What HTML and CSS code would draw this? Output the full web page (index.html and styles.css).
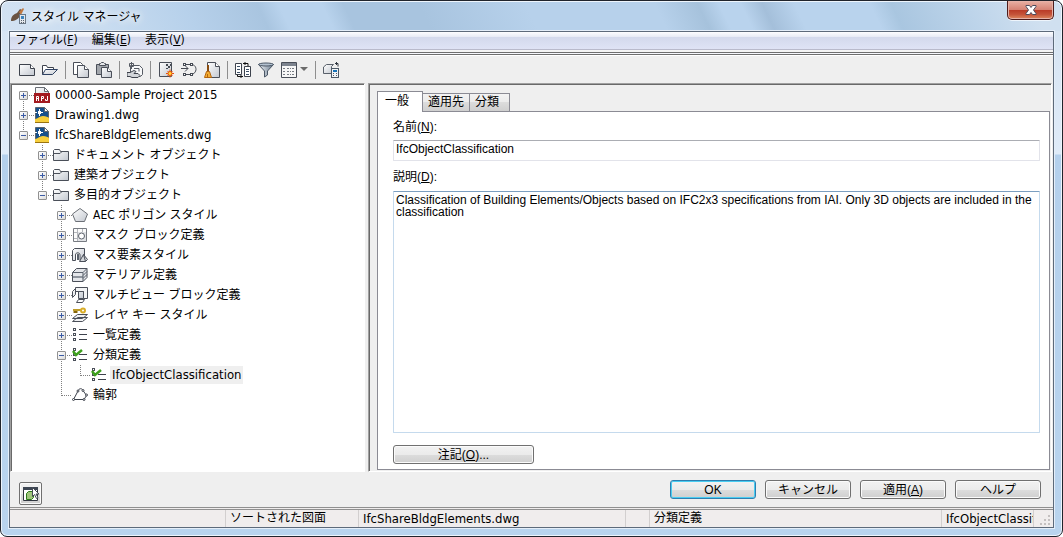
FILE: index.html
```
<!DOCTYPE html>
<html lang="ja">

<head>
    <meta charset="UTF-8">
    <meta name="viewport" content="width=device-width, initial-scale=1.0">
    <title>スタイル マネージャ</title>
    <link rel="stylesheet" href="styles.css">
</head>

<body>
    <!-- shared icons -->
    <svg class="defs" aria-hidden="true">
        <defs>
            <linearGradient id="paper" x1="0" y1="0" x2="1" y2="1">
                <stop offset="0" stop-color="#ffffff" />
                <stop offset="1" stop-color="#c3c8d0" />
            </linearGradient>
            <linearGradient id="steel" x1="0" y1="0" x2="1" y2="0">
                <stop offset="0" stop-color="#f4f7fa" />
                <stop offset="1" stop-color="#66788c" />
            </linearGradient>
        </defs>
        <symbol id="i-dwg" viewBox="0 0 16 16">
            <path d="M1.500 .5h9l4 4v11h-13z" fill="#16508c" stroke="#5a6470" />
            <path d="M10.500 .5v4h4z" fill="#fff" stroke="#5a6470" />
            <path d="M1 12c3 0 4-3 8-3 3 0 5 1 6 2v5H1z" fill="#f7cf3c" />
            <path d="M1 15.500h14" stroke="#9a7412" fill="none" />
            <path d="M1 5.500h2M7 5.500h2M5.500 2v2M5.500 7v2" stroke="#fff" fill="none" />
            <rect x="4" y="4" width="3" height="3" fill="#fff" />
        </symbol>
        <symbol id="i-folder" viewBox="0 0 16 16">
            <path d="M.5 13.500V3.500l1-1h5l1 2h8v9z" fill="url(#paper)" stroke="#4a4f59" />
            <path d="M1 6.500h6l2-2" fill="none" stroke="#4a4f59" />
        </symbol>
        <symbol id="i-class" viewBox="0 0 16 16">
            <g fill="#fff" stroke="#4a4f59">
                <rect x="1.500" y="1.500" width="2" height="2" />
                <rect x="1.500" y="6.500" width="2" height="2" />
                <rect x="1.500" y="11.500" width="2" height="2" />
            </g>
            <path d="M7 7.500h8M7 12.500h8" stroke="#3d424c" />
            <path d="M1 4l3 4 6-5" fill="none" stroke="#3da01c" stroke-width="2.500" />
        </symbol>
    </svg>

    <div class="window">
        <header class="titlebar">
            <svg class="icon" viewBox="0 0 16 16">
                <path d="M0 13c0-5 3-7 6-8l3-4 2 1-2 5c-1 4-5 6-9 6z" fill="#6a5342" />
                <path d="M8 4l4-4 1 1-3 6z" fill="#c07840" />
                <rect x="8.500" y="6.500" width="6" height="9" fill="#e4e8ed" stroke="#697684" />
                <path d="M10 8h3v3h-3z" fill="#3b83bd" />
                <path d="M10 12.500h1M12 12.500h1M10 14.500h1M12 14.500h1" stroke="#59636e" />
            </svg>
            <h1>スタイル マネージャ</h1>
            <button class="close" type="button" aria-label="閉じる">
                <svg viewBox="0 0 12 10">
                    <path d="M1 .5h3.500L6 2.500 7.500 .5H11v1L8.500 5 11 8.500v1H7.500L6 7.500 4.500 9.500H1v-1L3.500 5 1 1.500z" fill="#fff" stroke="#4e4c5d" />
                </svg>
            </button>
        </header>

        <div class="client">
            <nav class="menubar">
                <button type="button">ファイル(<u>F</u>)</button>
                <button type="button">編集(<u>E</u>)</button>
                <button type="button">表示(<u>V</u>)</button>
            </nav>

            <div class="toolbar">
                <button type="button" aria-label="新規">
                    <svg viewBox="0 0 16 16">
                        <path d="M.5 2.500h11l4 4v7H.5z" fill="url(#paper)" stroke="#3d424c" />
                        <path d="M11.500 2.500v4h4" fill="#fff" stroke="#3d424c" />
                    </svg>
                </button>
                <button type="button" aria-label="開く">
                    <svg viewBox="0 0 16 16">
                        <path d="M.5 12.500v-9h4l1 2h6v2" fill="#fff" stroke="#3d424c" />
                        <path d="M.5 12.500l3-5h12l-5 5z" fill="url(#paper)" stroke="#2f4262" />
                    </svg>
                </button>
                <span class="sep"></span>
                <button type="button" aria-label="コピー">
                    <svg viewBox="0 0 16 16">
                        <path d="M4 12.500H.5V.5h7l2 2v1" fill="#fff" stroke="#4a4f59" />
                        <path d="M4.500 3.500h7l4 4v8h-11z" fill="url(#paper)" stroke="#4a4f59" />
                        <path d="M11.500 3.500v4h4" fill="#fff" stroke="#4a4f59" />
                    </svg>
                </button>
                <button type="button" aria-label="貼り付け">
                    <svg viewBox="0 0 16 16">
                        <path d="M.5 2.500h12v10H.5z" fill="#a2a6ac" stroke="#4a4f59" />
                        <path d="M3.500 3.500v-2h1l1-1h2l1 1h1v2z" fill="#e6e8eb" stroke="#4a4f59" />
                        <path d="M5.500 5.500h6l4 4v6h-10z" fill="url(#paper)" stroke="#4a4f59" />
                        <path d="M11.500 5.500v4h4" fill="#fff" stroke="#4a4f59" />
                    </svg>
                </button>
                <span class="sep"></span>
                <button type="button" aria-label="スタイルを編集">
                    <svg viewBox="0 0 16 16">
                        <path d="M3.500 3.500h9l3 3v6l-2 2h-4l-6-2z" fill="#f7f8f9" stroke="#565b64" />
                        <path d="M4.500 0v7M2.500 1.500h4v3h-4zM7 6.500h5v3" fill="none" stroke="#565b64" />
                        <path d="M0 10.500h3l4-2 2 1-2 2h4l2 2-2 2H5l-2-1H0z" fill="#d2d5d9" stroke="#3d424c" />
                    </svg>
                </button>
                <span class="sep"></span>
                <button type="button" aria-label="新規スタイル">
                    <svg viewBox="0 0 16 16">
                        <path d="M1.500 .5h12v14h-12z" fill="url(#paper)" stroke="#4a4f59" />
                        <path d="M8 2h2v2H8zM12 2h1v2h-1zM10 4h2v2h-2zM8 6h2v1H8z" fill="#454a53" />
                        <path d="M12 7.500v8M8 11.500h8M9.500 9l5 5M14.500 9l-5 5" stroke="#e85210" />
                        <circle cx="12" cy="11.500" r="2" fill="#ffd936" stroke="#e85210" />
                    </svg>
                </button>
                <button type="button" aria-label="名前変更">
                    <svg viewBox="0 0 16 16">
                        <path d="M0 6.500h7M4 3.500l3 3-3 3M4 2.500h6c4 0 5 3 5 5s-2 5-5 5H4" fill="none" stroke="#454a53" />
                        <g fill="#fff" stroke="#454a53">
                            <rect x="2.500" y="1.500" width="2" height="2" />
                            <rect x="9.500" y="1.500" width="2" height="2" />
                            <rect x="2.500" y="11.500" width="2" height="2" />
                            <rect x="9.500" y="11.500" width="2" height="2" />
                        </g>
                    </svg>
                </button>
                <button type="button" aria-label="名前削除">
                    <svg viewBox="0 0 16 16">
                        <path d="M3.500 .5h8l4 4v11h-12z" fill="url(#paper)" stroke="#4a4f59" />
                        <path d="M11.500 .5v4h4" fill="#fff" stroke="#4a4f59" />
                        <path d="M4 3v6" stroke="#8a4d10" stroke-width="2" />
                        <path d="M2.500 9.500h3l2 6h-7z" fill="#f5ad31" stroke="#b36510" />
                        <path d="M3.500 12v3" stroke="#b36510" />
                    </svg>
                </button>
                <span class="sep"></span>
                <button type="button" aria-label="並べ替え">
                    <svg viewBox="0 0 16 16">
                        <path d="M.5 1.500h6v11h-6zM9.500 4.500h6v10h-6z" fill="#fff" stroke="#3d424c" />
                        <path d="M2 4.500h3M2 7.500h3M2 10.500h3M11 7.500h3M11 9.500h3M11 12.500h3" stroke="#3d5168" />
                        <path d="M8 1.500h5V4M10 0v3M2.500 13v1.500H8M6 13v3" fill="none" stroke="#111" />
                    </svg>
                </button>
                <button type="button" aria-label="フィルタ">
                    <svg viewBox="0 0 16 16">
                        <path d="M.5 2.500L6.500 9v6l3-2V9l6-6.500z" fill="url(#steel)" stroke="#4a5665" />
                        <ellipse cx="8" cy="2.500" rx="7.500" ry="1.500" fill="#b3c1d0" stroke="#4a5665" />
                    </svg>
                </button>
                <button class="drop" type="button" aria-label="表示">
                    <svg viewBox="0 0 16 16">
                        <path d="M.5 .5h15v15H.5z" fill="#f7f7f7" stroke="#4a4f59" />
                        <path d="M1 1h14v3H1z" fill="#7c838e" />
                        <path d="M2 6.500h3M6 6.500h4M11 6.500h3M2 9.500h3M6 9.500h4M11 9.500h3M2 12.500h3M6 12.500h4M11 12.500h3" stroke="#767b83" stroke-dasharray="2 1" />
                    </svg>
                    <svg class="arrow" viewBox="0 0 8 5">
                        <path d="M0 0h8L4 4z" fill="#6b6b6b" />
                    </svg>
                </button>
                <span class="sep"></span>
                <button type="button" aria-label="ビューア">
                    <svg viewBox="0 0 16 16">
                        <path d="M.5 11.500V5l3-2.500h7l-2 2v7z" fill="url(#paper)" stroke="#59606a" />
                        <path d="M12 1.500h3v3M13.500 0v3" fill="none" stroke="#30363f" />
                        <rect x="8.500" y="6.500" width="7" height="9" fill="#f1f4f7" stroke="#4d5966" />
                        <path d="M10 8h4v2h-4z" fill="#1672b8" />
                        <path d="M10 11.500h1M13 11.500h1M10 13.500h1M13 13.500h1" stroke="#4d5966" />
                    </svg>
                </button>
            </div>

            <main class="panes">
                <section class="treepane">
                    <ul class="tree root">
                        <li>
                            <div class="row">
                                <button class="toggle plus" type="button" aria-label="展開"></button>
                                <svg class="icon" viewBox="0 0 16 16">
                                    <path d="M1.500 .5h9l4 4v11h-13z" fill="url(#paper)" stroke="#686d75" />
                                    <path d="M10.500 .5v4h4z" fill="#fff" stroke="#686d75" />
                                    <path d="M0 6h16v10H0z" fill="#a31a20" />
                                    <path d="M2.500 14V9.500h2V14M2 11.500h3M7.500 14V9.500h2v2h-2M13.500 9v4.500h-2V12" fill="none" stroke="#fff" />
                                </svg>
                                <span class="latin">00000-Sample Project 2015</span>
                            </div>
                        </li>
                        <li>
                            <div class="row">
                                <button class="toggle plus" type="button" aria-label="展開"></button>
                                <svg class="icon"><use href="#i-dwg" /></svg>
                                <span class="latin">Drawing1.dwg</span>
                            </div>
                        </li>
                        <li>
                            <div class="row">
                                <button class="toggle" type="button" aria-label="折りたたみ"></button>
                                <svg class="icon"><use href="#i-dwg" /></svg>
                                <span class="latin">IfcShareBldgElements.dwg</span>
                            </div>
                            <ul class="tree">
                                <li>
                                    <div class="row">
                                        <button class="toggle plus" type="button" aria-label="展開"></button>
                                        <svg class="icon"><use href="#i-folder" /></svg>
                                        <span>ドキュメント オブジェクト</span>
                                    </div>
                                </li>
                                <li>
                                    <div class="row">
                                        <button class="toggle plus" type="button" aria-label="展開"></button>
                                        <svg class="icon"><use href="#i-folder" /></svg>
                                        <span>建築オブジェクト</span>
                                    </div>
                                </li>
                                <li>
                                    <div class="row">
                                        <button class="toggle" type="button" aria-label="折りたたみ"></button>
                                        <svg class="icon"><use href="#i-folder" /></svg>
                                        <span>多目的オブジェクト</span>
                                    </div>
                                    <ul class="tree">
                                        <li>
                                            <div class="row">
                                                <button class="toggle plus" type="button" aria-label="展開"></button>
                                                <svg class="icon" viewBox="0 0 16 16">
                                                    <path d="M8 1.500l7.500 5.500-3 7.500h-9L.5 7z" fill="url(#paper)" stroke="#6c7077" />
                                                </svg>
                                                <span>AEC ポリゴン スタイル</span>
                                            </div>
                                        </li>
                                        <li>
                                            <div class="row">
                                                <button class="toggle plus" type="button" aria-label="展開"></button>
                                                <svg class="icon" viewBox="0 0 16 16">
                                                    <path d="M1.500 1.500h13v13h-13z" fill="#fbfbfb" stroke="#777b82" />
                                                    <path d="M5.500 2v12M2 5.500h12M10.500 2v4M2 11.500h4" stroke="#b4b7bc" />
                                                    <path d="M6 5h8v9H6z" fill="#e0e2e5" />
                                                    <circle cx="9.500" cy="9" r="3" fill="#fff" stroke="#5b616b" />
                                                </svg>
                                                <span>マスク ブロック定義</span>
                                            </div>
                                        </li>
                                        <li>
                                            <div class="row">
                                                <button class="toggle plus" type="button" aria-label="展開"></button>
                                                <svg class="icon" viewBox="0 0 16 16">
                                                    <path d="M.5 13.500v-10l2-2h10v10l-2 2H8V8C8 5 3.500 5 3.500 8v5.500z" fill="url(#paper)" stroke="#4a4f59" />
                                                    <path d="M5 13V8c0-2 2-2 2 0v5" fill="#59606b" />
                                                    <path d="M11.500 7.500l4 5-2 2h-6z" fill="#d4d7db" stroke="#4a4f59" />
                                                    <path d="M11.500 7.500l2 7" stroke="#4a4f59" />
                                                </svg>
                                                <span>マス要素スタイル</span>
                                            </div>
                                        </li>
                                        <li>
                                            <div class="row">
                                                <button class="toggle plus" type="button" aria-label="展開"></button>
                                                <svg class="icon" viewBox="0 0 16 16">
                                                    <path d="M.5 5.500l4-4h10.500v9l-4 4H.5z" fill="#e4e6ea" stroke="#4a4f59" />
                                                    <path d="M1 9h10v2H1z" fill="#8e949d" />
                                                    <path d="M.5 5.500H11l4-4M11 8.500l4-4M11 11.500l4-4M11 5.500v9" fill="none" stroke="#59606b" />
                                                </svg>
                                                <span>マテリアル定義</span>
                                            </div>
                                        </li>
                                        <li>
                                            <div class="row">
                                                <button class="toggle plus" type="button" aria-label="展開"></button>
                                                <svg class="icon" viewBox="0 0 16 16">
                                                    <path d="M3.500 .5h12v11h-4v-7h-8z" fill="#f3f4f5" stroke="#4a4f59" />
                                                    <path d="M.5 4.500l3-3v6l-3 3zM6.500 4.500h5v7h-5z" fill="url(#paper)" stroke="#4a4f59" />
                                                    <path d="M6.500 12.500h6l-2 3h-6z" fill="#fff" stroke="#4a4f59" />
                                                </svg>
                                                <span>マルチビュー ブロック定義</span>
                                            </div>
                                        </li>
                                        <li>
                                            <div class="row">
                                                <button class="toggle plus" type="button" aria-label="展開"></button>
                                                <svg class="icon" viewBox="0 0 16 16">
                                                    <path d="M.5 14.500l5-4h10l-5 4zM.5 11.500l5-4h10l-5 4z" fill="#f0f1f3" stroke="#4a4f59" />
                                                    <path d="M1 3h8M2.500 4v2M4.500 4v2" fill="none" stroke="#86670a" stroke-width="2" />
                                                    <path d="M1 3h8" stroke="#f7d34a" />
                                                    <circle cx="11" cy="3.500" r="2" fill="#fff" stroke="#d9ad28" stroke-width="2" />
                                                </svg>
                                                <span>レイヤ キー スタイル</span>
                                            </div>
                                        </li>
                                        <li>
                                            <div class="row">
                                                <button class="toggle plus" type="button" aria-label="展開"></button>
                                                <svg class="icon" viewBox="0 0 16 16">
                                                    <g fill="#fff" stroke="#4a4f59">
                                                        <rect x="1.500" y="1.500" width="2" height="2" />
                                                        <rect x="1.500" y="6.500" width="2" height="2" />
                                                        <rect x="1.500" y="11.500" width="2" height="2" />
                                                    </g>
                                                    <path d="M7 2.500h8M7 7.500h8M7 12.500h8" stroke="#3d424c" />
                                                </svg>
                                                <span>一覧定義</span>
                                            </div>
                                        </li>
                                        <li>
                                            <div class="row">
                                                <button class="toggle" type="button" aria-label="折りたたみ"></button>
                                                <svg class="icon"><use href="#i-class" /></svg>
                                                <span>分類定義</span>
                                            </div>
                                            <ul class="tree">
                                                <li>
                                                    <div class="row leaf">
                                                        <svg class="icon"><use href="#i-class" /></svg>
                                                        <span class="latin selected">IfcObjectClassification</span>
                                                    </div>
                                                </li>
                                            </ul>
                                        </li>
                                        <li>
                                            <div class="row leaf">
                                                <svg class="icon" viewBox="0 0 16 16">
                                                    <path d="M1.500 12.500L6 4c1-3 4-3 5-.5l3.500 5M1.500 12.500H12l2.500-4" fill="none" stroke="#3d424c" />
                                                    <g fill="#fff" stroke="#3d424c">
                                                        <circle cx="1.500" cy="12.500" r="1" />
                                                        <circle cx="6" cy="4" r="1" />
                                                        <circle cx="11" cy="3.500" r="1" />
                                                        <circle cx="14.500" cy="8" r="1" />
                                                        <circle cx="12" cy="12.500" r="1" />
                                                    </g>
                                                </svg>
                                                <span>輪郭</span>
                                            </div>
                                        </li>
                                    </ul>
                                </li>
                            </ul>
                        </li>
                    </ul>
                </section>

                <section class="detail">
                    <div class="tabs" role="tablist">
                        <button class="tab active" type="button" role="tab" aria-selected="true">一般</button>
                        <button class="tab" type="button" role="tab" aria-selected="false">適用先</button>
                        <button class="tab" type="button" role="tab" aria-selected="false">分類</button>
                    </div>
                    <form class="page">
                        <label for="name">名前(<u>N</u>):</label>
                        <input id="name" type="text" value="IfcObjectClassification">
                        <label for="desc">説明(<u>D</u>):</label>
                        <textarea id="desc">Classification of Building Elements/Objects based on IFC2x3 specifications from IAI. Only 3D objects are included in the classification</textarea>
                        <button class="btn notes" type="button">注記(<u>O</u>)...</button>
                    </form>
                </section>
            </main>

            <div class="actions">
                <button class="viewer" type="button" aria-label="ビューアの切り替え">
                    <svg viewBox="0 0 16 16">
                        <path d="M.5 1.500h14v13H.5z" fill="#fff" stroke="#30363f" />
                        <path d="M0 1h15v3H0z" fill="#3d4653" />
                        <path d="M3.500 13.500v-6l2-2h5v6l-2 2z" fill="#9fc47c" stroke="#2c7a18" />
                        <path d="M9.500 1.500v9l2-2 2 4 1.500-1-2-3.500H16z" fill="#fff" stroke="#454b55" />
                    </svg>
                </button>
                <button class="btn default" type="button">OK</button>
                <button class="btn" type="button">キャンセル</button>
                <button class="btn" type="button">適用(<u>A</u>)</button>
                <button class="btn" type="button">ヘルプ</button>
            </div>

            <footer class="status">
                <span class="hint"></span>
                <span class="sort">ソートされた図面</span>
                <span class="file latin">IfcShareBldgElements.dwg</span>
                <span class="gap"></span>
                <span class="type">分類定義</span>
                <span class="style latin">IfcObjectClassification</span>
                <svg class="grip" viewBox="0 0 12 12">
                    <path d="M9 1h2v2H9zM5 5h2v2H5zM9 5h2v2H9zM1 9h2v2H1zM5 9h2v2H5zM9 9h2v2H9z" fill="#c4c0c0" />
                </svg>
            </footer>
        </div>
    </div>
</body>

</html>
```
FILE: styles.css
```
* {
    box-sizing: border-box;
}

body {
    margin: 0;
    background-color: #fff;
    color: #000;
    font-family: "DejaVu Sans Condensed", "Noto Sans CJK JP", sans-serif;
    font-size: 12px;
}

button {
    margin: 0;
    padding: 0;
    border: 0;
    background: none;
    color: inherit;
    font: inherit;
}

svg {
    display: block;
    flex: none;
}

.defs {
    position: absolute;
    width: 0;
    height: 0;
}

/* glass frame */
.window {
    display: flex;
    flex-direction: column;
    min-height: 100vh;
    padding: 0 8px 8px;
    border: 1px solid #20242c;
    border-radius: 8px 8px 7px 7px;
    box-shadow: inset 0 0 0 1px #eef5fc;
    background:
        linear-gradient(65deg, #d3e2f2 0, #c8dcf0 10%, #b7d1eb 18%, #a9c5e0 25%, #b9d3ed 27%, #b9d3ed 31%, #a8c4df 33%, #a8c4df 40%, #b7d1eb 50%, #b7d1eb 62%, #a6c2dc 66%, #b9d3ed 68%, #b9d3ed 70%, #a4bfda 72%, #b9d3ed 75%, #b9d3ed 82%, #a9c6e0 84%, #bdd4ea 91%, #d0e0f0 97%) 0 0 / 100% 30px no-repeat,
        linear-gradient(to bottom, #d5e3f2 0, #dfebf8 153px, #b4d0ec 154px, #b9d4ee 100%);
}

.titlebar {
    display: flex;
    align-items: center;
    height: 29px;
    padding-left: 2px;
}

.titlebar .icon {
    width: 16px;
    height: 16px;
}

.titlebar h1 {
    flex: 1;
    margin: 0 0 0 4px;
    font-size: 12px;
    font-weight: 400;
    text-shadow: 0 0 6px #fff, 0 0 10px #fff, 0 0 14px #fff;
}

.close {
    display: flex;
    align-items: center;
    justify-content: center;
    align-self: flex-start;
    width: 47px;
    height: 19px;
    border: 1px solid #4d1c1c;
    border-top: 0;
    border-radius: 0 0 5px 5px;
    box-shadow: inset 0 0 0 1px #e6b2a8, 0 1px 0 #eef5fc;
    background: linear-gradient(to bottom, #e8b0a4 0, #d58374 48%, #b93a26 50%, #c5543a 75%, #dd8a60 100%);
}

.close svg {
    width: 12px;
    height: 10px;
}

.client {
    display: flex;
    flex: 1;
    flex-direction: column;
    min-height: 0;
    margin-top: 1px;
    border: 1px solid #5d6a7a;
    box-shadow: 0 0 0 1px #e4eef9;
    background-color: #efefef;
}

/* menu */
.menubar {
    display: flex;
    gap: 2px;
    height: 23px;
    padding-bottom: 5px;
    border-bottom: 3px double #6e6e6e;
    background: linear-gradient(to bottom, #fdfdff 0, #e6eaf5 5px, #d3d9ec 5px, #dfe3f5 17px, #b9bacb 17px, #b9bacb 18px, #f4f4f4 18px);
}

.menubar button {
    height: 17px;
    padding: 0 7px 0 5px;
    line-height: 17px;
}

/* toolbar */
.toolbar {
    display: flex;
    align-items: center;
    height: 28px;
    padding-left: 6px;
    border-top: 1px solid #fff;
}

.toolbar button {
    display: flex;
    align-items: center;
    gap: 3px;
    width: 23px;
    height: 24px;
    padding-left: 3px;
}

.toolbar button.drop {
    width: 34px;
}

.toolbar svg {
    width: 16px;
    height: 16px;
}

.toolbar .arrow {
    width: 8px;
    height: 5px;
}

.sep {
    width: 8px;
    height: 18px;
    background: linear-gradient(#8f8f8f, #8f8f8f) 3px 0 / 1px 100% no-repeat;
}

/* panes */
.panes {
    display: flex;
    flex: 1;
    gap: 3px;
    padding-right: 1px;
}

.treepane {
    width: 355px;
    padding: 0 0 0 8px;
    border: 1px solid #a0a0a0;
    border-right-color: #fff;
    border-bottom-color: #fff;
    box-shadow: inset 1px 1px 0 #696969;
    background-color: #fff;
}

.tree {
    margin: 0 0 0 19px;
    padding: 0;
    list-style: none;
}

.tree.root {
    margin: 1px 0 0;
}

.tree li {
    background: repeating-linear-gradient(to bottom, #808080 0, #808080 1px, transparent 1px, transparent 2px) 4px 0 / 1px 100% no-repeat;
}

.tree li:last-child {
    background-size: 1px 11px;
}

.tree.root > li:first-child {
    background-position: 4px 10px;
    background-size: 1px 10px;
}

.row {
    display: flex;
    align-items: center;
    height: 20px;
}

.toggle {
    width: 9px;
    height: 9px;
    border: 1px solid #919191;
    border-radius: 1px;
    background:
        linear-gradient(#3b5ba5, #3b5ba5) center / 5px 1px no-repeat,
        linear-gradient(to bottom right, #fff, #dcdcdc);
}

.toggle.plus {
    background:
        linear-gradient(#3b5ba5, #3b5ba5) center / 5px 1px no-repeat,
        linear-gradient(#3b5ba5, #3b5ba5) center / 1px 5px no-repeat,
        linear-gradient(to bottom right, #fff, #dcdcdc);
}

/* dotted connector between toggle and icon */
.row::before {
    content: "";
    order: 1;
    width: 6px;
    height: 1px;
    background: repeating-linear-gradient(to right, transparent 0, transparent 1px, #808080 1px, #808080 2px);
}

.row.leaf::before {
    width: 11px;
    margin-left: 4px;
}

.row .icon {
    order: 2;
    width: 16px;
    height: 16px;
}

.row span {
    order: 3;
    margin-left: 3px;
    padding: 0 2px;
    line-height: 18px;
    white-space: nowrap;
}

.latin {
    font-size: 13px;
}

.row .selected {
    background-color: #efefef;
}

.detail {
    display: flex;
    flex: 1;
    flex-direction: column;
    min-width: 0;
    padding: 7px 1px 1px 8px;
    border: 1px solid #a0a0a0;
    border-right-color: #fff;
    border-bottom-color: #fff;
    box-shadow: inset 1px 1px 0 #696969;
    font-family: "Liberation Sans", "Noto Sans CJK JP", sans-serif;
}

.tabs {
    display: flex;
    align-items: flex-end;
    height: 20px;
}

.tab {
    height: 18px;
    padding: 0 10px 0 5px;
    border: 1px solid #8b8b94;
    border-left-width: 0;
    border-bottom: 0;
    background: linear-gradient(to bottom, #f3f3f3 0, #ebebeb 50%, #dcdcdc 50%, #cfcfcf 100%);
    line-height: 17px;
}

.tab.active {
    z-index: 1;
    height: 21px;
    margin-bottom: -1px;
    padding: 0 13px 2px 7px;
    border-left-width: 1px;
    background: #fff;
}

.tab.active + .tab {
    padding-right: 5px;
}

.page {
    display: flex;
    flex: 1;
    flex-direction: column;
    padding: 7px 9px 5px 15px;
    border: 1px solid #8b8b94;
    background-color: #fff;
}

.page label {
    height: 17px;
    line-height: 17px;
}

.page input,
.page textarea {
    display: block;
    margin: 0;
    padding: 0 2px;
    border: 1px solid #e2e3ea;
    border-top-color: #abadb3;
    border-radius: 1px;
    outline: 0;
    background-color: #fff;
    color: #000;
    font: inherit;
}

.page input {
    height: 21px;
    margin: 4px 0 8px;
    padding-bottom: 3px;
}

.page textarea {
    flex: 1;
    margin: 5px 0 12px;
    padding-top: 2px;
    border-color: #c5daed;
    border-top-color: #7c9fc0;
    line-height: 12px;
    resize: none;
}

.btn {
    width: 86px;
    height: 19px;
    border: 1px solid #707070;
    border-radius: 3px;
    box-shadow: inset 0 0 0 1px #fbfbfb;
    background: linear-gradient(to bottom, #f2f2f2 0, #ebebeb 50%, #dddddd 50%, #cfcfcf 100%);
    font-family: "Liberation Sans", "Noto Sans CJK JP", sans-serif;
    line-height: 16px;
}

.btn.notes {
    width: 141px;
}

.btn.default {
    border-color: #2f7fb0;
    box-shadow: inset 0 0 0 1px #49cdf2;
}

.actions {
    display: flex;
    align-items: flex-start;
    gap: 9px;
    height: 35px;
    padding: 8px 12px 0 9px;
}

.viewer {
    display: flex;
    align-items: center;
    justify-content: center;
    width: 23px;
    height: 23px;
    margin: 2px auto 0 0;
    border: 1px solid #707070;
    border-radius: 2px;
    box-shadow: inset 0 0 0 1px #fbfbfb;
    background: linear-gradient(to bottom, #f2f2f2 0, #ebebeb 50%, #dddddd 50%, #cfcfcf 100%);
}

.viewer svg {
    width: 16px;
    height: 16px;
}

/* status bar */
.status {
    display: flex;
    height: 20px;
    border-top: 3px double #909090;
    background-color: #f0eded;
    line-height: 17px;
}

.status span {
    overflow: hidden;
    padding-left: 4px;
    border-right: 1px solid #d2cfcf;
    white-space: nowrap;
}

.status .hint {
    width: 216px;
}

.status .sort {
    width: 133px;
}

.status .file {
    width: 267px;
}

.status .gap {
    width: 24px;
}

.status .type {
    flex: 1;
}

.status .style {
    width: 92px;
}

.status .grip {
    align-self: flex-end;
    width: 12px;
    height: 12px;
    margin: 0 2px 1px 5px;
}
```
